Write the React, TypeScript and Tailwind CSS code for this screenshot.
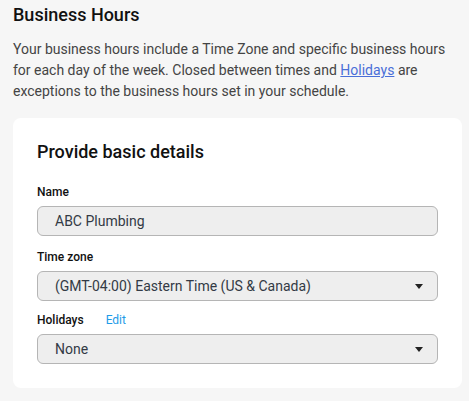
export default function App() {
  const field =
    "flex items-center h-[30px] w-full rounded-[6px] border border-[#b5b5b5] bg-[#eeeeee] pl-[17px] pr-[14px] text-[14px] text-[#333a45]";

  return (
    <div className="min-h-[401px] w-[469px] bg-[#f6f6f6] pl-[13px] pr-[7px] pt-[3px] pb-[14px] font-['Roboto',sans-serif] text-[#222]">
      <h1 className="text-[18px] leading-[24px] font-medium text-[#111]">Business Hours</h1>
      <p className="mt-[12px] pr-[10px] text-[14px] leading-[21px] text-[#444]">
        Your business hours include a Time Zone and specific business hours for each day of the week. Closed between
        times and{" "}
        <a href="#" className="text-[#4a6fd8] underline">
          Holidays
        </a>{" "}
        are exceptions to the business hours set in your schedule.
      </p>

      <div className="mt-[16px] rounded-[8px] bg-white px-[24px] pt-[22px] pb-[24px]">
        <h2 className="text-[18px] leading-[24px] font-medium text-[#111]">Provide basic details</h2>

        <label className="mt-[20px] block text-[12px] leading-[16px] font-medium text-[#111]">Name</label>
        <div className={`${field} mt-[6px]`}>ABC Plumbing</div>

        <label className="mt-[13px] block text-[12px] leading-[16px] font-medium text-[#111]">Time zone</label>
        <div className={`${field} mt-[6px] justify-between`}>
          <span>(GMT-04:00) Eastern Time (US &amp; Canada)</span>
          <Caret />
        </div>

        <div className="mt-[11px] flex items-center text-[12px] leading-[16px]">
          <span className="font-medium text-[#111]">Holidays</span>
          <a href="#" className="ml-[22px] text-[#1e9be8]">
            Edit
          </a>
        </div>
        <div className={`${field} mt-[6px] justify-between`}>
          <span>None</span>
          <Caret />
        </div>
      </div>
    </div>
  );
}

function Caret() {
  return (
    <svg width="8" height="5" viewBox="0 0 8 5" className="shrink-0">
      <path d="M0 0h8L4 5z" fill="#222" />
    </svg>
  );
}
